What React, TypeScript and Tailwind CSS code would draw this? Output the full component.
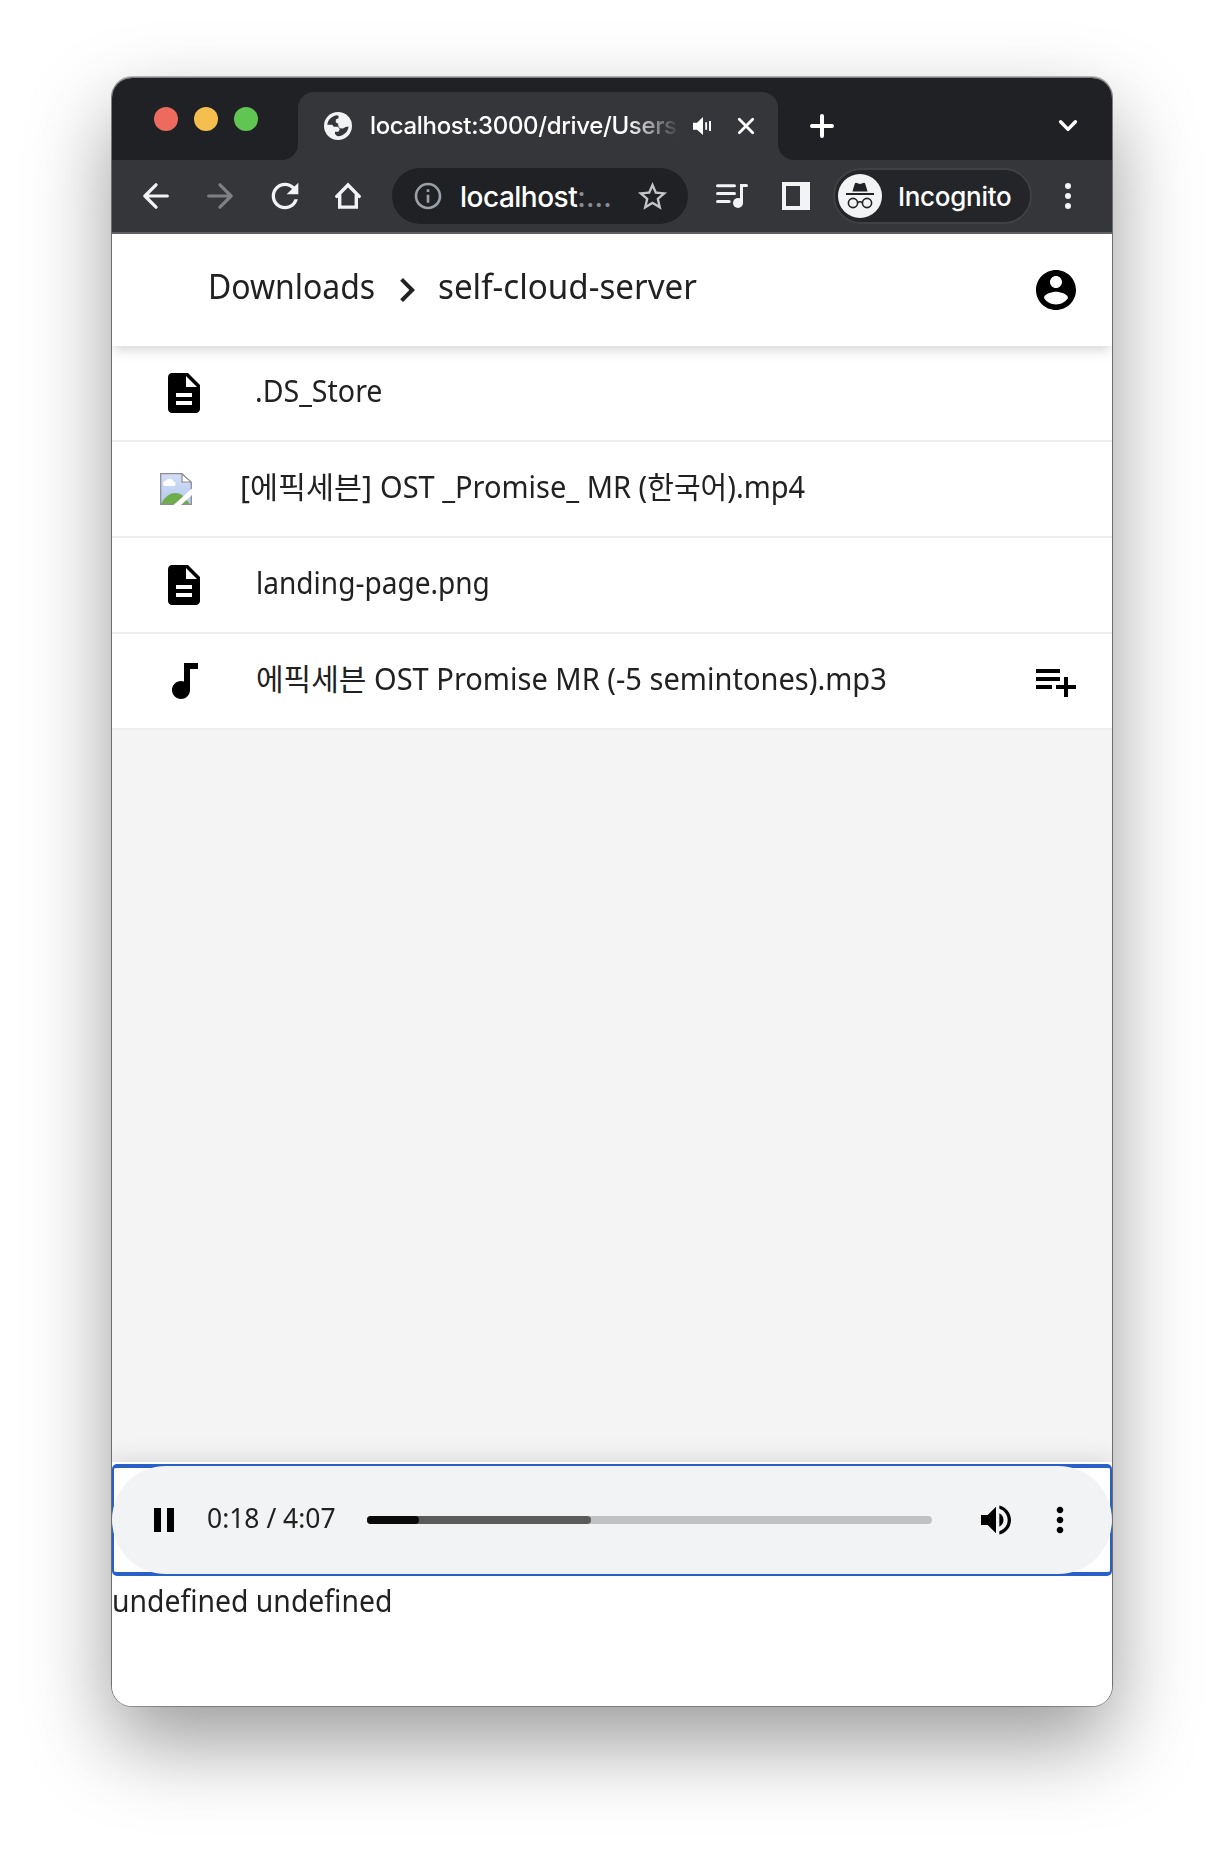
import type { ReactNode } from 'react';
import {
  MdAudiotrack,
  MdDescription,
  MdInfoOutline,
  MdMoreVert,
  MdRefresh,
  MdStarBorder,
  MdVolumeUp,
} from 'react-icons/md';

function GlobeIcon() {
  return (
    <svg width="28" height="28" viewBox="0 0 28 28" className="shrink-0">
      <circle cx="14" cy="14" r="14" fill="#f1f3f4" />
      <path d="M3.3 12.8C3.9 8 7.6 4.2 12.4 3.3l2.2.4-.2 2.6-2.6 1.3v3l2.4 1.2v2l1.6 2.5 3.2.2 2.6-1.6 3-.4c-.4 4.9-4.6 9.4-10.4 9.7l-1.2-.2-2-2v-2.2h3.4l1.4-2.6-1.8-2.4H9.8l-1.6-2.1z" fill="#35363a" />
    </svg>
  );
}

function TabSpeakerIcon() {
  return (
    <svg width="18" height="18" viewBox="0 0 18 18" fill="#fff" className="shrink-0">
      <path d="M0 5.7h4L10 0v18l-6-5.3H0z" />
      <path d="M12.2 5.3h1.9v7.4h-1.9zM16 4h2v10h-2z" />
    </svg>
  );
}

function PlusIcon() {
  return (
    <svg width="24" height="24" viewBox="0 0 24 24" stroke="#fff" strokeWidth="4" strokeLinecap="round">
      <path d="M12 2v20M2 12h20" />
    </svg>
  );
}

function CloseIcon() {
  return (
    <svg width="18" height="18" viewBox="0 0 18 18" stroke="#fff" strokeWidth="2.8" strokeLinecap="round" className="shrink-0">
      <path d="M2.3 2.3l13.4 13.4M15.7 2.3L2.3 15.7" />
    </svg>
  );
}

function ArrowIcon({ className }: { className: string }) {
  return (
    <svg width="26" height="26" viewBox="0 0 26 26" fill="none" stroke="currentColor" strokeWidth="3.2" strokeLinecap="round" strokeLinejoin="round" className={className}>
      <path d="M24.3 13H2M13 1.8L1.9 13 13 24.2" />
    </svg>
  );
}

function HomeIcon() {
  return (
    <svg width="26" height="28" viewBox="0 0 26 28" fill="none" stroke="#f1f3f4" strokeWidth="3.4" strokeLinecap="round">
      <path d="M1.8 14.4L13 3l11.2 11.4" />
      <path d="M4.7 12.8v12.3h16.6V12.8" />
    </svg>
  );
}

function MediaIcon() {
  return (
    <svg width="32" height="26" viewBox="0 0 32 26" fill="none" stroke="#f1f3f4" strokeWidth="3" strokeLinecap="round">
      <path d="M1.5 2.7h17M1.5 10.5h17M1.5 18.5h11.7M25.5 19V2.5h5" />
      <circle cx="22" cy="20" r="5" fill="#f1f3f4" stroke="none" />
    </svg>
  );
}

function IncognitoAvatar() {
  return (
    <svg width="44" height="44" viewBox="0 0 44 44">
      <circle cx="22" cy="22" r="22" fill="#f1f3f4" />
      <path d="M14.4 17.4l2.4-7.6c.2-.8 1-1.2 1.8-.9l3.4 1 3.4-1c.8-.3 1.6.1 1.8.9l2.4 7.6z" fill="#202124" />
      <path d="M8 20h28" stroke="#202124" strokeWidth="1.8" />
      <g fill="none" stroke="#202124" strokeWidth="1.6">
        <circle cx="15" cy="29" r="4.6" />
        <circle cx="29" cy="29" r="4.6" />
        <path d="M19.6 28.6c1.4-1 3.4-1 4.8 0" />
      </g>
    </svg>
  );
}

function BrokenImageIcon() {
  return (
    <svg width="32" height="32" viewBox="0 0 32 32" className="shrink-0">
      <defs>
        <linearGradient id="sky" x1="0" y1="0" x2="0" y2="1">
          <stop offset="0" stopColor="#d3dff8" />
          <stop offset="1" stopColor="#b5c8ee" />
        </linearGradient>
      </defs>
      <path d="M.7.7h21.1L31.3 10v21.3H.7z" fill="url(#sky)" />
      <path d="M1.2 31C4.5 24 9.5 20 15 20c6.5 0 11 4.5 14.5 11z" fill="#6fad4b" />
      <path d="M5.500 13a2.500 2.500 0 0 1 .2-5 4.600 4.600 0 0 1 8.300.8 2.200 2.200 0 0 1 .2 4.200z" fill="#fff" />
      <path d="M.7.7H22L31.3 10v21.300H.7z" fill="none" stroke="#8b8d92" strokeWidth="1.3" />
      <path d="M22 .9V9h9.200z" fill="#fff" stroke="#8b8d92" strokeWidth="1.2" />
      <path d="M13.500 32L32 15.500V22L21 32z" fill="#fff" />
    </svg>
  );
}

function ChevronRight() {
  return (
    <svg width="48" height="48" viewBox="0 0 24 24" fill="#212121" className="shrink-0">
      <path d="M10 6L8.59 7.41 13.17 12l-4.58 4.59L10 18l6-6z" />
    </svg>
  );
}

function AccountIcon() {
  return (
    <svg width="48" height="48" viewBox="0 0 24 24">
      <path d="M12 2C6.48 2 2 6.48 2 12s4.48 10 10 10 10-4.48 10-10S17.52 2 12 2zm0 3c1.66 0 3 1.34 3 3s-1.34 3-3 3-3-1.34-3-3 1.34-3 3-3zm0 14.2c-2.5 0-4.71-1.28-6-3.22.03-1.99 4-3.08 6-3.08 1.99 0 5.97 1.09 6 3.08-1.29 1.94-3.5 3.22-6 3.22z" />
    </svg>
  );
}

function PlaylistAddIcon() {
  return (
    <svg width="48" height="48" viewBox="0 0 24 24">
      <path d="M14 10H2v2h12v-2zm0-4H2v2h12V6zm4 8v-4h-2v4h-4v2h4v4h2v-4h4v-2h-4zM2 16h8v-2H2v2z" />
    </svg>
  );
}

function TabStrip() {
  return (
    <div className="flex h-[82px] bg-[#202124] font-[Inter,sans-serif]">
      <div className="flex h-[82px] w-[170px] items-center gap-4 pl-[42px]">
        <span className="size-6 rounded-full bg-[#ed6a5e]" />
        <span className="size-6 rounded-full bg-[#f5bf4f]" />
        <span className="size-6 rounded-full bg-[#61c554]" />
      </div>
      <div className="mt-auto size-4 bg-[#35363a]">
        <div className="size-4 rounded-br-2xl bg-[#202124]" />
      </div>
      <div className="mt-[14px] flex w-[480px] items-center rounded-t-2xl bg-[#35363a] pl-[26px]">
        <GlobeIcon />
        <div className="ml-[17px] w-[309px] overflow-hidden whitespace-nowrap pl-[1px] text-[24px] font-medium leading-[32px] tracking-[-0.35px] text-white [mask-image:linear-gradient(to_right,black_258px,transparent_312px)]">
          localhost:3000/drive/Users/
        </div>
        <div className="ml-[15px] flex items-center gap-[26px]">
          <TabSpeakerIcon />
          <CloseIcon />
        </div>
      </div>
      <div className="mt-auto size-4 bg-[#35363a]">
        <div className="size-4 rounded-bl-2xl bg-[#202124]" />
      </div>
      <div className="flex flex-1 items-center justify-between pl-4 pr-[34px] pt-[14px]">
        <PlusIcon />
        <svg width="20" height="14" viewBox="0 0 20 14" fill="none" stroke="#fff" strokeWidth="3.4" strokeLinecap="round" strokeLinejoin="round">
          <path d="M2.6 2.8L10 10.4l7.4-7.6" />
        </svg>
      </div>
    </div>
  );
}

function Toolbar() {
  return (
    <div className="flex h-[74px] items-center border-b-2 border-[#5f6064] bg-[#35363a] pl-[31px] font-[Inter,sans-serif] text-[#f1f3f4]">
      <ArrowIcon className="shrink-0" />
      <ArrowIcon className="ml-[38px] shrink-0 rotate-180 text-[#7f8083]" />
      <MdRefresh className="ml-[32px] size-10 shrink-0" />
      <div className="ml-[30px] shrink-0">
        <HomeIcon />
      </div>
      <div className="ml-[31px] flex h-14 w-[296px] shrink-0 items-center rounded-full bg-[#202124] pl-[20px]">
        <MdInfoOutline className="size-8 shrink-0 text-[#9aa0a6]" />
        <div className="ml-4 w-[180px] whitespace-nowrap pt-px text-[28px] font-medium leading-[36px] tracking-[-0.5px] text-white">
          localhost<span className="tracking-[0.2px] text-[#8b8d91]">:...</span>
        </div>
        <MdStarBorder className="-ml-[5px] size-[35px] shrink-0 text-[#c4c4c6]" />
      </div>
      <div className="ml-7 shrink-0">
        <MediaIcon />
      </div>
      <div className="ml-[34px] size-7 shrink-0 border-4 border-r-[10px] border-[#f1f3f4]" />
      <div className="ml-[23px] flex h-14 w-[199px] shrink-0 items-center rounded-full border-2 border-[#404145] bg-[#242529] pl-[3px]">
        <IncognitoAvatar />
        <span className="ml-[16px] pt-[2px] text-[26px] font-medium leading-[34px] tracking-[-0.3px] text-white">Incognito</span>
      </div>
      <div className="ml-[33px] flex flex-col gap-1">
        <span className="size-[6px] rounded-full bg-[#f1f3f4]" />
        <span className="size-[6px] rounded-full bg-[#f1f3f4]" />
        <span className="size-[6px] rounded-full bg-[#f1f3f4]" />
      </div>
    </div>
  );
}

function FileRow({ icon, action, children }: { icon: ReactNode; action?: ReactNode; children: ReactNode }) {
  return (
    <div className="flex h-24 items-center border-b-2 border-[#eeeeee] bg-white pl-12 pr-8">
      {icon}
      <div className="ml-12 flex flex-1 whitespace-pre pb-[4px] text-[30px] leading-10">{children}</div>
      {action}
    </div>
  );
}

function AudioPlayer() {
  return (
    <div className="h-[112px] rounded-[5px] border-x-2 border-y-4 border-[#2860c8] bg-white">
      <div className="-mx-[2px] -mt-[2px] flex h-[108px] items-center rounded-full bg-[#f1f3f4]">
        <div className="ml-[42px] flex gap-[6px]">
          <span className="h-6 w-[7px] bg-black" />
          <span className="h-6 w-[7px] bg-black" />
        </div>
        <div className="ml-[33px] w-[160px] whitespace-nowrap pb-[4px] text-[27px] leading-9">
          <span className="inline-block origin-left scale-x-[0.98]">0:18 / 4:07</span>
        </div>
        <div className="h-2 w-[565px] overflow-hidden rounded-full bg-[#c0c1c2]">
          <div className="h-2 w-[224px] rounded-r-full bg-[#5a5a5b]">
            <div className="h-2 w-[52px] rounded-r-full bg-[#0a0a0a]" />
          </div>
        </div>
        <MdVolumeUp className="ml-11 size-10 text-black" />
        <MdMoreVert className="ml-6 size-10 text-black" />
      </div>
    </div>
  );
}

export default function App() {
  const fileIcon = <MdDescription className="size-12 shrink-0 text-black" />;
  return (
    <div className="h-[1854px] w-[1224px] overflow-hidden bg-white px-[112px] pt-[78px]">
      <div className="flex h-[1628px] w-[1000px] flex-col overflow-hidden rounded-[20px] bg-white font-['Noto_Sans','Noto_Sans_CJK_KR',sans-serif] text-[#212121] shadow-[0_0_0_1px_rgba(0,0,0,0.28),0_-1px_0_1px_rgba(0,0,0,0.25),0_36px_84px_rgba(0,0,0,0.4)]">
        <TabStrip />
        <Toolbar />
        <header className="relative flex h-[112px] shrink-0 items-center bg-white pl-24 pr-8 text-[34px] leading-[48px] shadow-[0_8px_12px_-2px_rgba(0,0,0,0.1),0_4px_8px_-2px_rgba(0,0,0,0.06)]">
          <div className="w-[174.5px] whitespace-nowrap pb-[8px]">
            <span className="inline-block origin-left scale-x-[0.938]">Downloads</span>
          </div>
          <ChevronRight />
          <div className="ml-[7.5px] flex-1 whitespace-nowrap pb-[8px]">
            <span className="inline-block origin-left scale-x-[0.976]">self-cloud-server</span>
          </div>
          <AccountIcon />
        </header>
        <main className="flex-1 bg-[#f4f4f4]">
          <FileRow icon={fileIcon}>
            <span className="-ml-px origin-left scale-x-[0.952]">.DS_Store</span>
          </FileRow>
          <FileRow icon={<BrokenImageIcon />}>
            <span className="origin-left scale-x-[1.015]">[에픽세븐] </span>
            <span className="ml-[2px] origin-left scale-x-[0.966]">OST _Promise_ MR (한국어).mp4</span>
          </FileRow>
          <FileRow icon={fileIcon}>
            <span className="origin-left scale-x-[0.935]">landing-page.png</span>
          </FileRow>
          <FileRow icon={<MdAudiotrack className="size-12 shrink-0 text-black" />} action={<PlaylistAddIcon />}>
            <span>에픽세븐 </span>
            <span className="origin-left scale-x-[0.968]">OST Promise MR (-5 semintones).mp3</span>
          </FileRow>
        </main>
        <footer className="h-[244px] shrink-0 bg-white pt-[2px] shadow-[0_0_24px_rgba(0,0,0,0.14)]">
          <AudioPlayer />
          <p className="pt-px text-[30px] leading-[48px]">
            <span className="inline-block origin-left scale-x-[0.945]">undefined undefined</span>
          </p>
        </footer>
      </div>
    </div>
  );
}
